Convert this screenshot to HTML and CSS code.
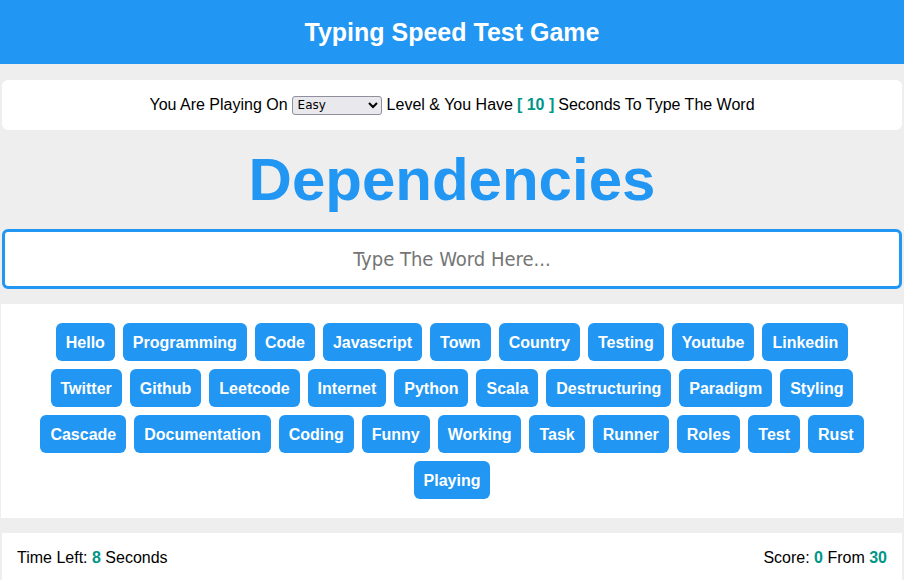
FILE: index.html
```html
<!DOCTYPE html>
<html>
<head>
<meta charset="utf-8">
<link rel="stylesheet" href="styles.css">
</head>
<body>
<header class="top-bar"><h1 class="title">Typing Speed Test Game</h1></header>
<main class="game">
  <div class="message">
    You Are Playing On
    <select class="level-select"><option>Easy</option><option>Normal</option><option>Hard</option></select>
    Level &amp; You Have <span class="accent">[ 10 ]</span> Seconds To Type The Word
  </div>
  <div class="the-word">Dependencies</div>
  <input class="input" type="text" placeholder="Type The Word Here...">
  <div class="upcoming-words">
    <span class="word">Hello</span><span class="word">Programming</span><span class="word">Code</span><span class="word">Javascript</span><span class="word">Town</span><span class="word">Country</span><span class="word">Testing</span><span class="word">Youtube</span><span class="word">Linkedin</span><span class="word">Twitter</span><span class="word">Github</span><span class="word">Leetcode</span><span class="word">Internet</span><span class="word">Python</span><span class="word">Scala</span><span class="word">Destructuring</span><span class="word">Paradigm</span><span class="word">Styling</span><span class="word">Cascade</span><span class="word">Documentation</span><span class="word">Coding</span><span class="word">Funny</span><span class="word">Working</span><span class="word">Task</span><span class="word">Runner</span><span class="word">Roles</span><span class="word">Test</span><span class="word">Rust</span><span class="word">Playing</span>
  </div>
  <div class="control">
    <div class="time">Time Left: <span class="accent">8</span> Seconds</div>
    <div class="score">Score: <span class="accent">0</span> From <span class="accent">30</span></div>
  </div>
</main>
</body>
</html>
```
FILE: styles.css
```css
* { box-sizing: border-box; }
html, body { margin: 0; padding: 0; }
body {
  background: #eeeeee;
  font-family: "Liberation Sans", Arial, sans-serif;
  color: #000;
}
.top-bar {
  background: #2196f3;
  height: 64px;
  display: flex;
  align-items: center;
  justify-content: center;
}
.title {
  margin: 0;
  color: #fff;
  font-size: 25px;
  font-weight: bold;
}
.game {
  padding: 16px 2px 0;
  display: flex;
  flex-direction: column;
}
.message {
  background: #fff;
  border-radius: 6px;
  height: 50px;
  display: flex;
  align-items: center;
  justify-content: center;
  gap: 4px;
  font-size: 16px;
}
.level-select {
  font-family: "DejaVu Sans", Tahoma, sans-serif;
  font-size: 12px;
  width: 90px;
  height: 19px;
  margin: 0 1px 0 0;
  background: #e9e9ed;
  border: 1px solid #8f8f9d;
  border-radius: 3px;
  padding: 0 1px;
}
.accent { color: #009688; font-weight: bold; }
.the-word {
  color: #2196f3;
  font-weight: bold;
  font-size: 60px;
  text-align: center;
  height: 99px;
  line-height: 99px;
}
.input {
  height: 60px;
  width: 100%;
  border: 3px solid #2196f3;
  border-radius: 6px;
  background: #fff;
  font-family: "DejaVu Sans Condensed", "DejaVu Sans", Tahoma, sans-serif;
  font-stretch: condensed;
  font-size: 20px;
  text-align: center;
  outline: none;
}
.input::placeholder { color: #757575; }
.upcoming-words {
  margin: 15px -1px 0 -1px;
  background: #fff;
  padding: 19px 30px;
  display: flex;
  flex-wrap: wrap;
  justify-content: center;
  gap: 8px;
}
.word {
  background: #2196f3;
  color: #fff;
  font-weight: bold;
  font-size: 16px;
  line-height: 19px;
  padding: 10px 10px 9px;
  border-radius: 6px;
}
.control {
  margin-top: 15px;
  background: #fff;
  height: 50px;
  padding: 0 15px;
  display: flex;
  align-items: center;
  justify-content: space-between;
  font-size: 16px;
}
```
